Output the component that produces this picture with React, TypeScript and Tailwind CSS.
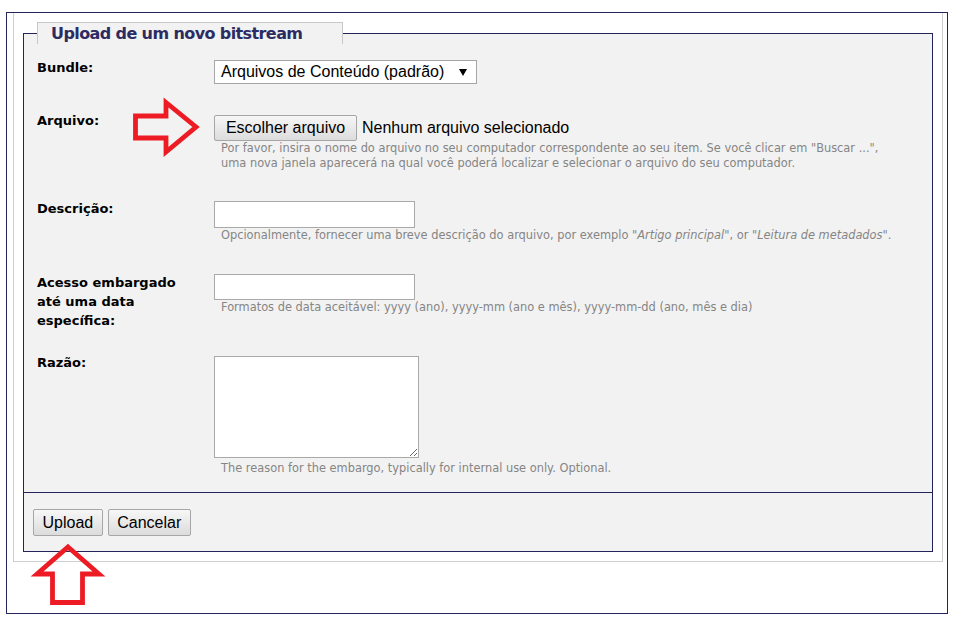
import React from 'react';

interface RowProps {
    label: React.ReactNode;
    rowClass: string;
    widgetClass: string;
    children: React.ReactNode;
}

const Row: React.FC<RowProps> = ({ label, rowClass, widgetClass, children }) => (
    <div className={`flex items-start ${rowClass}`}>
        <div className="w-[177px] shrink-0 pr-[27px] text-[13px] leading-[19px] font-bold text-black">{label}</div>
        <div className={widgetClass}>{children}</div>
    </div>
);

const Help: React.FC<{ className?: string; children: React.ReactNode }> = ({ className = '', children }) => (
    <div className={`pl-[7px] text-[11.4px] leading-[15px] text-[#858585] ${className}`}>{children}</div>
);

const btn =
    'h-[27px] rounded-[2px] border border-[#a6a6a6] bg-linear-to-b from-[#f7f7f7] to-[#dcdcdc] px-[8.5px] text-[16px] leading-[20px] text-black';

const App: React.FC = () => {
    return (
        <div className="relative min-h-[634px] w-[967px] bg-white pl-[6px] pt-[12px] font-['DejaVu_Sans',sans-serif]">
            <div className="w-[942px] border border-[#24245c] pb-[51px] pl-[6px]">
                <div className="w-[930px] border-x border-b border-[#cfcfcf] p-[9px]">
                    <fieldset className="border border-[#24245c] bg-[#f2f2f2]">
                        <legend className="ml-[13px] w-[306px] border-x border-t border-[#c8c8c8] bg-[#f2f2f2] pl-[13px] text-[16px] leading-[21px] font-bold tracking-[-0.6px] text-[#2c2c62]">
                            Upload de um novo bitstream
                        </legend>

                        <div className="pb-[16px] pl-[13px] pt-[14px]">
                            <Row label="Bundle:" rowClass="" widgetClass="mt-[2px]">
                                <div className="flex h-[24px] w-[263px] items-center border border-[#a6a6a6] bg-white pl-[6px] font-['Liberation_Sans',Arial,sans-serif] text-[16px] text-black">
                                    <span>Arquivos de Conteúdo (padrão)</span>
                                    <svg className="ml-auto mr-[9px]" width="8" height="7" viewBox="0 0 8 7">
                                        <polygon points="0,0 8,0 4,7" fill="#000" />
                                    </svg>
                                </div>
                            </Row>

                            <Row label="Arquivo:" rowClass="mt-[27px]" widgetClass="mt-[4px]">
                                <div className="flex h-[26px] items-center font-['Liberation_Sans',Arial,sans-serif] text-[16px] text-black">
                                    <button className="h-[26px] w-[143px] rounded-[2px] border border-[#a6a6a6] bg-linear-to-b from-[#f7f7f7] to-[#dcdcdc] text-[16px] leading-[20px] text-black">
                                        Escolher arquivo
                                    </button>
                                    <span className="ml-[5px]">Nenhum arquivo selecionado</span>
                                </div>
                                <Help>
                                    Por favor, insira o nome do arquivo no seu computador correspondente ao seu item. Se você clicar em "Buscar ...",
                                    <br />
                                    uma nova janela aparecerá na qual você poderá localizar e selecionar o arquivo do seu computador.
                                </Help>
                            </Row>

                            <Row label="Descrição:" rowClass="mt-[28px]" widgetClass="mt-[2px]">
                                <input type="text" className="block h-[27px] w-[201px] border border-[#a9a9a9] bg-white" />
                                <Help>
                                    Opcionalmente, fornecer uma breve descrição do arquivo, por exemplo "<i>Artigo principal</i>", or "<i>Leitura de metadados</i>".
                                </Help>
                            </Row>

                            <Row label="Acesso embargado até uma data específica:" rowClass="mt-[30px]" widgetClass="mt-[1px]">
                                <input type="text" className="block h-[26px] w-[201px] border border-[#a9a9a9] bg-white" />
                                <Help>Formatos de data aceitável: yyyy (ano), yyyy-mm (ano e mês), yyyy-mm-dd (ano, mês e dia)</Help>
                            </Row>

                            <Row label="Razão:" rowClass="mt-[23px]" widgetClass="mt-[3px]">
                                <textarea className="block h-[102px] w-[205px] border border-[#a9a9a9] bg-white" />
                                <Help className="mt-[3px]">The reason for the embargo, typically for internal use only. Optional.</Help>
                            </Row>
                        </div>

                        <div className="flex gap-[5px] border-t border-[#24245c] pb-[15px] pl-[9px] pt-[16px] font-['Liberation_Sans',Arial,sans-serif]">
                            <button className={btn}>Upload</button>
                            <button className={btn}>Cancelar</button>
                        </div>
                    </fieldset>
                </div>
            </div>

            {/* red arrows drawn over the form */}
            <svg className="pointer-events-none absolute left-0 top-0" width="967" height="634">
                <polygon
                    points="135.5,116 166,116 166,102.5 196,127 166,152 166,138 135.5,138"
                    fill="none"
                    stroke="#ed1c24"
                    strokeWidth="4.8"
                />
                <polygon
                    points="68,547 99,574 82.5,574 82.5,602.5 52.5,602.5 52.5,574 37,574"
                    fill="none"
                    stroke="#ed1c24"
                    strokeWidth="4.8"
                />
            </svg>
        </div>
    );
};

export default App;
